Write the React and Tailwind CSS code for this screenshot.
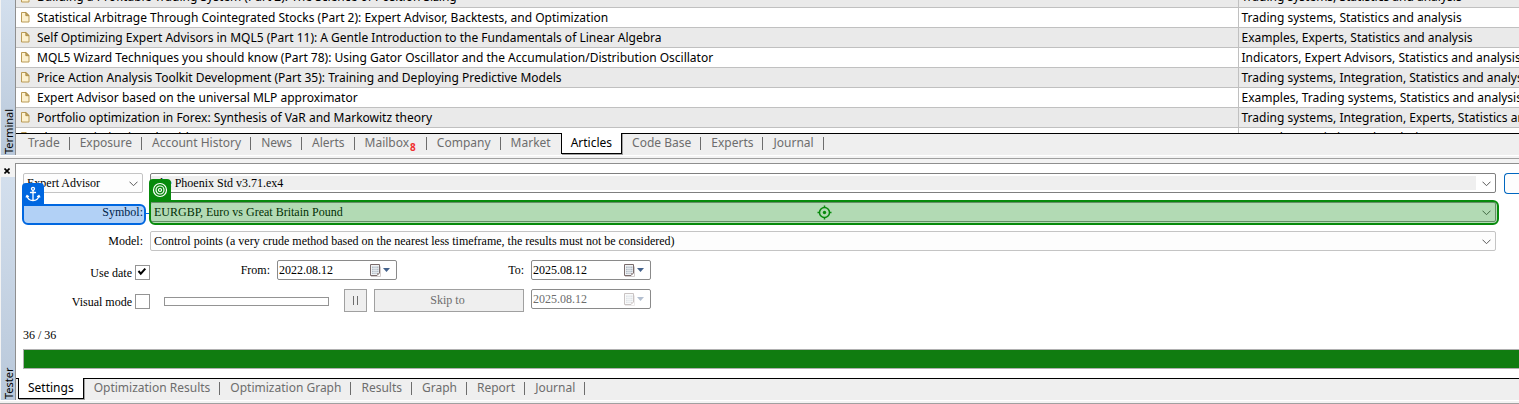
import { useState } from "react";

const articles = [
  ["Building a Profitable Trading System (Part 2): The Science of Position Sizing", "Trading systems, Statistics and analysis"],
  ["Statistical Arbitrage Through Cointegrated Stocks (Part 2): Expert Advisor, Backtests, and Optimization", "Trading systems, Statistics and analysis"],
  ["Self Optimizing Expert Advisors in MQL5 (Part 11): A Gentle Introduction to the Fundamentals of Linear Algebra", "Examples, Experts, Statistics and analysis"],
  ["MQL5 Wizard Techniques you should know (Part 78): Using Gator Oscillator and the Accumulation/Distribution Oscillator", "Indicators, Expert Advisors, Statistics and analysis"],
  ["Price Action Analysis Toolkit Development (Part 35): Training and Deploying Predictive Models", "Trading systems, Integration, Statistics and analysis"],
  ["Expert Advisor based on the universal MLP approximator", "Examples, Trading systems, Statistics and analysis"],
  ["Portfolio optimization in Forex: Synthesis of VaR and Markowitz theory", "Trading systems, Integration, Experts, Statistics and analysis"],
  ["Chaos optimization algorithm (COA)", "Examples, Statistics and analysis"],
];

const terminalTabs = ["Trade", "Exposure", "Account History", "News", "Alerts", "Mailbox", "Company", "Market", "Articles", "Code Base", "Experts", "Journal"];
const testerTabs = ["Settings", "Optimization Results", "Optimization Graph", "Results", "Graph", "Report", "Journal"];

function PageIcon() {
  return (
    <svg className="block h-3 w-[9px] shrink-0" viewBox="0 0 9 12" aria-hidden="true">
      <path d="M.5 1.500h4.500l3 3v6.500h-7.500z" fill="#fdf1cf" stroke="#b99a55" />
      <path d="M4.800 1.500v3.200H8z" fill="#c9a960" stroke="#a58642" strokeWidth=".8" />
    </svg>
  );
}

function CalendarIcon() {
  return (
    <svg className="block h-[13px] w-6" viewBox="0 0 24 13" aria-hidden="true">
      <path d="M2 12.500h9.500v-10" fill="none" stroke="#d2cccc" />
      <path d="M1.500.5h9v8.500l-2.500 2.500h-6.500z" fill="#f1f3f5" stroke="#7a6c6c" strokeLinejoin="round" />
      <path d="M3 2.500h6.500v6h-1.500v1.500H3z" fill="#b4bec8" />
      <path d="M5 2v8M7 2v8M3 4.500h7M3 6.500h7M3 8.500h7" stroke="#eef1f4" strokeWidth=".7" />
      <path d="M10.500 9H8v2.500z" fill="#a59a9a" />
      <path d="M14 4h7l-3.500 4z" fill="#44628c" />
    </svg>
  );
}

function Chevron() {
  return (
    <svg className="pointer-events-none absolute top-[7px] right-[4px] h-[6px] w-[9px]" viewBox="0 0 9 6" fill="none" stroke="#5a5a5a" aria-hidden="true">
      <path d="M.5.7l4 4 4-4" />
    </svg>
  );
}

function Combo({ label, id, options, boxClass, selectClass }) {
  return (
    <div className={`relative h-5 rounded-xs border ${boxClass}`}>
      <select id={id} aria-label={label} className={`block w-full appearance-none truncate outline-none ${selectClass}`}>
        {options.map((o) => (
          <option key={o}>{o}</option>
        ))}
      </select>
      <Chevron />
    </div>
  );
}

function DateField({ id, value, label, disabled }) {
  return (
    <div className="flex h-5 w-[120px] items-center rounded-xs border border-[#8a8a8a] bg-white">
      <input id={id} aria-label={label} defaultValue={value} disabled={disabled} className="min-w-0 flex-1 pl-px outline-none disabled:text-[#6d6d6d]" />
      <button type="button" aria-label="Open calendar" disabled={disabled} className="mr-[3px] disabled:opacity-40">
        <CalendarIcon />
      </button>
    </div>
  );
}

function Check({ id, label, checked }) {
  return (
    <div className="flex w-[127px] items-end justify-end gap-[3px]">
      <label htmlFor={id} className="leading-[14px]">{label}</label>
      <span className="relative block size-[15px]">
        <input id={id} type="checkbox" defaultChecked={checked} className="peer block size-[15px] appearance-none border border-[#949494] bg-white" />
        <svg className="pointer-events-none absolute inset-0 hidden size-[15px] peer-checked:block" viewBox="0 0 15 15" fill="none" stroke="#000" strokeWidth="2" aria-hidden="true">
          <path d="M3.500 6l2.300 2.700 4.500-5" />
        </svg>
      </span>
    </div>
  );
}

function Tabs({ items, active, onSelect, badge }) {
  return (
    <div role="tablist" className="flex h-[22px] shrink-0 border-t border-black bg-[#efefef] pl-[2px] text-[12px] leading-[18px]">
      {items.map((t, i) => {
        const on = t === active;
        const bar = !on && items[i + 1] !== active;
        return (
          <button
            key={t}
            type="button"
            role="tab"
            aria-selected={on}
            onClick={() => onSelect(t)}
            className={
              on
                ? "-mt-px flex h-[21px] border-x border-b border-black bg-white px-[9px] pt-px text-black shadow-[1px_1px_0_#a0a0a0]"
                : "flex h-[18px] items-center pl-[10px] text-[#6d6d6d]"
            }
          >
            <span>{t}</span>
            {t === badge && <span className="mt-[9px] px-px text-[10px] leading-[9px] font-bold text-[#f03030]">8</span>}
            {!on && <span className={`ml-[9px] h-[13px] w-px ${bar ? "bg-[#6d6d6d]" : ""}`} />}
          </button>
        );
      })}
    </div>
  );
}

function Rail({ title, closable }) {
  return (
    <div className="flex w-[15px] shrink-0 flex-col pl-px">
      {closable && (
        <button type="button" aria-label="Close" className="flex h-[14px] shrink-0 items-center justify-center bg-[#f3f3f3] pr-[3px] pt-px">
          <svg className="size-[6px]" viewBox="0 0 6 6" stroke="#000" strokeWidth="1.600" aria-hidden="true">
            <path d="M.5.5l5 5M5.500.5l-5 5" />
          </svg>
        </button>
      )}
      <div className="flex min-h-0 flex-1 rotate-180 items-center justify-start overflow-hidden bg-linear-to-t from-[#d3dfed] to-[#b9c8da] pt-px text-[11px] leading-[13px] [writing-mode:vertical-rl]">
        {title}
      </div>
    </div>
  );
}

export default function App() {
  const [terminal, setTerminal] = useState("Articles");
  const [tester, setTester] = useState("Settings");
  return (
    <main className="overflow-hidden bg-[#f3f3f3] font-['Noto_Sans','Segoe_UI',sans-serif] text-black">
      <section className="flex border-b border-white">
        <Rail title="Terminal" />
        <div className="min-w-0 flex-1 border-l border-[#8f8f8f] bg-white">
          <div className="h-[133px] overflow-hidden">
            <table className="-mt-[13px] w-full table-fixed border-collapse text-[12px] leading-[19px]">
              <colgroup>
                <col />
                <col className="w-[281px]" />
              </colgroup>
              <tbody>
                {articles.map(([title, topic]) => (
                  <tr key={title} className="h-5 border-b border-[#c0c0c0] odd:bg-[#eaeaea]">
                    <td className="border-r border-[#c0c0c0] p-0">
                      <div className="flex items-center gap-[7px] overflow-hidden pl-[5px] whitespace-nowrap">
                        <PageIcon />
                        <a href="#article">{title}</a>
                      </div>
                    </td>
                    <td className="overflow-hidden p-0 pl-[3px] whitespace-nowrap">{topic}</td>
                  </tr>
                ))}
              </tbody>
            </table>
          </div>
          <Tabs items={terminalTabs} active={terminal} onSelect={setTerminal} badge="Mailbox" />
        </div>
      </section>

      <div className="h-[7px] pt-[2px]">
        <div className="h-px bg-[#a0a0a0]" />
      </div>

      <section className="flex">
        <Rail title="Tester" closable />
        <div className="min-w-0 flex-1 border-t border-l border-[#8f8f8f] bg-white">
          <form className="flex h-[214px] flex-col pt-[9px] pl-[7px] font-['Liberation_Serif','Times_New_Roman',serif] text-[12px] leading-4">
            <div className="grid grid-cols-[120px_1fr_16px] gap-x-[7px] gap-y-[9px]">
              <Combo label="Program type" options={["Expert Advisor", "Indicator"]} boxClass="border-[#c4c4c4] bg-[#fdfdfd]" selectClass="h-[18px] pl-[3px]" />
              <Combo label="Expert" options={["the Phoenix Std v3.71.ex4"]} boxClass="border-[#7f7f7f] bg-white pt-[2px] pr-[19px]" selectClass="h-[14px] bg-[#efefef] pl-[6px] leading-[12px]" />
              <button type="button" aria-label="Expert properties" className="-mb-px ml-px h-[21px] rounded-l-sm border border-r-0 border-[#0067c0] bg-[#fdfdfd]" />

              <div className="relative flex h-5 items-center justify-end">
                <label htmlFor="symbol">Symbol:</label>
                <div className="pointer-events-none absolute top-[2px] -right-[3px] -bottom-[3px] -left-px rounded-b-md rounded-tr-md border-2 border-[#0067e0] bg-[#0067e0]/30" />
                <div className="pointer-events-none absolute -top-[19px] -left-px flex h-[22px] w-[22px] items-center justify-center rounded-t-sm bg-[#0067e0]">
                  <svg className="size-4" viewBox="0 0 16 16" fill="none" stroke="#fff" strokeWidth="1.300" strokeLinecap="round" strokeLinejoin="round" aria-hidden="true">
                    <circle cx="8" cy="2.800" r="1.500" />
                    <path d="M8 4.500v10M5.500 6.500h5M2 9.500c.5 3 2.600 5 6 5 3.400 0 5.500-2 6-5M1.200 11L2 9.500l1.500 1M12.500 10.500l1.500-1 .8 1.500" />
                  </svg>
                </div>
                <div className="pointer-events-none absolute top-[11px] -right-[7px] h-px w-1 bg-[#0067e0]" />
              </div>
              <div className="relative">
                <Combo label="Symbol" id="symbol" options={["EURGBP, Euro vs Great Britain Pound"]} boxClass="border-[#8f8f8f] bg-[#fdfdfd]" selectClass="h-[18px] pl-[3px]" />
                <div className="pointer-events-none absolute -top-[2px] -right-[3px] -bottom-[3px] -left-px flex items-center justify-center rounded-r-md rounded-bl-md border-2 border-[#078a0c] bg-[#078a0c]/30">
                  <svg className="size-[15px]" viewBox="0 0 15 15" fill="none" stroke="#078a0c" strokeWidth="1.500" aria-hidden="true">
                    <circle cx="7.500" cy="7.500" r="5" />
                    <path d="M7.500.5v2.500M7.500 12v2.500M.5 7.500H3M12 7.500h2.500" />
                    <circle cx="7.500" cy="7.500" r="1.700" fill="#078a0c" stroke="none" />
                  </svg>
                </div>
                <div className="pointer-events-none absolute -top-[23px] -left-px flex h-[22px] w-[22px] items-center justify-center rounded-t-sm bg-[#078a0c]">
                  <svg className="size-4" viewBox="0 0 16 16" fill="none" stroke="#fff" strokeWidth="1.200" aria-hidden="true">
                    <circle cx="8" cy="8" r="6.500" />
                    <circle cx="8" cy="8" r="4" />
                    <circle cx="8" cy="8" r="1.500" />
                  </svg>
                </div>
              </div>
              <span />

              <label htmlFor="model" className="flex h-5 items-center justify-end">Model:</label>
              <Combo id="model" label="Model" options={["Control points (a very crude method based on the nearest less timeframe, the results must not be considered)", "Every tick", "Open prices only"]} boxClass="border-[#c4c4c4] bg-[#fdfdfd]" selectClass="h-[18px] pl-[3px]" />
              <span />
            </div>

            <div className="mt-[9px] flex h-5 items-end">
              <Check id="use-date" label="Use date" checked />
              <label htmlFor="from" className="flex h-5 w-[127px] items-center justify-end pr-[7px]">From:</label>
              <DateField id="from" label="From" value="2022.08.12" />
              <label htmlFor="to" className="flex h-5 w-[134px] items-center justify-end pr-[7px]">To:</label>
              <DateField id="to" label="To" value="2025.08.12" />
            </div>

            <div className="mt-[9px] flex h-[23px] items-start">
              <div className="flex h-5 items-end">
                <Check id="visual" label="Visual mode" />
              </div>
              <div role="progressbar" aria-label="Speed" className="mt-2 ml-[14px] h-[9px] w-[165px] border border-[#949494]" />
              <button type="button" disabled aria-label="Pause" className="ml-[15px] flex h-[23px] w-[23px] items-center justify-center gap-[3px] border border-[#a0a0a0] bg-[#efefef] pb-px">
                <span className="h-[9px] w-px bg-[#6d6d6d]" />
                <span className="h-[9px] w-px bg-[#6d6d6d]" />
              </button>
              <button type="button" disabled className="ml-[7px] h-[23px] w-[150px] border border-[#a0a0a0] bg-[#efefef] pr-[3px] pb-px text-[#6d6d6d]">Skip to</button>
              <div className="ml-[7px]">
                <DateField id="skip" label="Skip to date" value="2025.08.12" disabled />
              </div>
            </div>

            <output className="mt-[15px]">36 / 36</output>
            <div role="progressbar" aria-label="Optimization progress" aria-valuenow={36} aria-valuemax={36} className="mt-[6px] h-5 border border-r-0 border-[#b0b0b0] bg-[#107c10]" />
          </form>
          <Tabs items={testerTabs} active={tester} onSelect={setTester} />
        </div>
      </section>
      <div className="border-y border-t-white border-b-[#a0a0a0] pb-[2px]" />
    </main>
  );
}
